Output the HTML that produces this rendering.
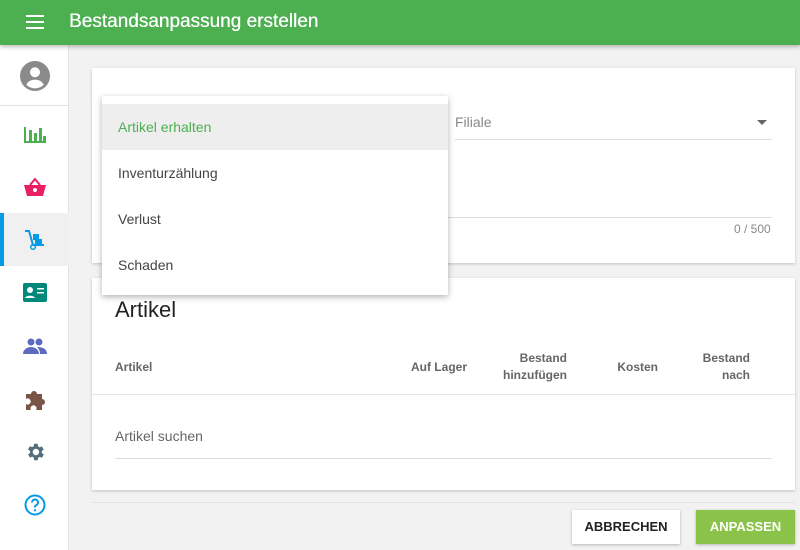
<!DOCTYPE html>
<html><head><meta charset="utf-8">
<style>
*{box-sizing:border-box;margin:0;padding:0}
body{width:800px;height:550px;overflow:hidden;background:#f2f2f2;font-family:"Liberation Sans",Arial,sans-serif;position:relative}
.hdr{position:absolute;left:0;top:0;width:800px;height:45px;background:#4caf50;box-shadow:0 2px 4px rgba(0,0,0,.25);z-index:5}
.hdr .t{position:absolute;left:69px;top:11px;color:#fff;font-size:19px;text-shadow:0.3px 0 0 #fff}
.burger{position:absolute;left:26px;top:15px;width:18px}
.burger i{display:block;height:2px;background:#fff;margin-bottom:4px}
.side{position:absolute;left:0;top:45px;width:69px;height:505px;background:#fff;border-right:1px solid #e3e3e3}
.ic{position:absolute;left:0;width:69px;height:53px;display:flex;align-items:center;justify-content:center}
.card{position:absolute;background:#fff;box-shadow:0 1px 3px rgba(0,0,0,.2)}
.dd{position:absolute;left:102px;top:96px;width:346px;height:199px;background:#fff;box-shadow:0 2px 6px rgba(0,0,0,.3);z-index:3;padding-top:8px}
.dd div{height:46px;line-height:46px;padding-left:16px;font-size:14px;color:#444}
.th{position:absolute;font-size:12px;color:#666;text-align:right;line-height:17px;font-weight:bold}
.btn{position:absolute;top:510px;height:34px;line-height:34px;text-align:center;font-size:13px;font-weight:bold;box-shadow:0 1px 3px rgba(0,0,0,.25)}
</style></head><body>
<div class="hdr"><div class="burger"><i></i><i></i><i></i></div><div class="t">Bestandsanpassung erstellen</div></div>
<div class="side">
 <div class="ic" style="top:4px;height:53px"><svg width="30" height="30" viewBox="0 0 24 24"><circle cx="12" cy="12" r="12" fill="#8a8a8a"/><circle cx="12" cy="9" r="4" fill="#fff"/><path d="M5 19c1.5-3 4-4 7-4s5.5 1 7 4a10 10 0 0 1-14 0z" fill="#fff"/></svg></div>
 <div style="position:absolute;left:0;top:60px;width:69px;border-top:1px solid #e3e3e3"></div>
 <div class="ic" style="top:62px"><svg width="22" height="20" viewBox="0 0 22 20"><g fill="#4caf50"><rect x="0" y="3" width="2" height="16"/><rect x="0" y="17" width="22" height="2"/><rect x="5" y="6" width="3" height="12"/><rect x="10" y="9" width="3" height="9"/><rect x="15" y="4" width="3" height="14"/><rect x="19" y="12" width="3" height="6"/></g></svg></div>
 <div class="ic" style="top:115px"><svg width="22" height="20" viewBox="0 0 22 20"><path d="M6 8l5-6 5 6" stroke="#e91e63" stroke-width="2" fill="none"/><path d="M0 8h22l-3 11H3z" fill="#e91e63"/><circle cx="11" cy="13" r="2" fill="#fff"/></svg></div>
 <div class="ic" style="top:168px;background:#f0f0f0"><div style="position:absolute;left:0;top:0;width:4px;height:53px;background:#039be5"></div><svg width="22" height="22" viewBox="0 0 22 22"><path d="M1 2h4l4 14h11" stroke="#039be5" stroke-width="2" fill="none"/><rect x="9" y="5" width="6" height="6" fill="#039be5"/><rect x="11" y="10" width="7" height="5" fill="#039be5"/><circle cx="9" cy="18" r="2.3" fill="none" stroke="#039be5" stroke-width="1.5"/></svg></div>
 <div class="ic" style="top:221px"><svg width="24" height="20" viewBox="0 0 24 20"><rect width="24" height="19" rx="2" fill="#00897b"/><circle cx="7" cy="7" r="3" fill="#fff"/><path d="M2 15c1-3 9-3 10 0z" fill="#fff"/><rect x="14" y="5" width="7" height="1.5" fill="#fff"/><rect x="14" y="9" width="7" height="1.5" fill="#fff"/></svg></div>
 <div class="ic" style="top:274px"><svg width="24" height="16" viewBox="0 0 24 16"><g fill="#5c6bc0"><circle cx="8" cy="4" r="3.5"/><circle cx="16" cy="4" r="3.5"/><path d="M0 16c0-5 5-7 8-7s8 2 8 7z"/><path d="M14 9c4 0 10 1 10 7h-7c0-3-1-5-3-7z"/></g></svg></div>
 <div class="ic" style="top:327px"><svg width="22" height="22" viewBox="0 0 22 22"><path d="M2 6h5a3 3 0 1 1 6 0h5v5a3 3 0 1 1 0 6v5h-6a3 3 0 1 0-5 0H2v-6a3 3 0 1 0 0-5z" fill="#795548"/></svg></div>
 <div class="ic" style="top:380px"><svg width="22" height="22" viewBox="0 0 24 24"><path fill="#546e7a" d="M19.4 13a7.5 7.5 0 0 0 0-2l2.1-1.6-2-3.5-2.5 1a7 7 0 0 0-1.7-1L15 3h-4l-.4 2.7a7 7 0 0 0-1.7 1l-2.5-1-2 3.5L6.6 11a7.5 7.5 0 0 0 0 2l-2.1 1.6 2 3.5 2.5-1a7 7 0 0 0 1.7 1L11 21h4l.4-2.7a7 7 0 0 0 1.7-1l2.5 1 2-3.5zM13 15.5a3.5 3.5 0 1 1 0-7 3.5 3.5 0 0 1 0 7z"/></svg></div>
 <div class="ic" style="top:433px"><svg width="22" height="22" viewBox="0 0 22 22"><circle cx="11" cy="11" r="9.5" fill="none" stroke="#039be5" stroke-width="2"/><path d="M8 8.5a3 3 0 1 1 4 2.8c-1 .5-1 1-1 2.2" fill="none" stroke="#039be5" stroke-width="2"/><circle cx="11" cy="16.3" r="1.2" fill="#039be5"/></svg></div>
</div>

<div class="card" style="left:92px;top:68px;width:703px;height:195px">
 <div style="position:absolute;left:363px;top:46px;font-size:14px;color:#888">Filiale</div>
 <div style="position:absolute;left:665px;top:52px;border:5px solid transparent;border-top-color:#666;border-bottom:0"></div>
 <div style="position:absolute;left:363px;top:71px;width:317px;border-top:1px solid #ddd"></div>
 <div style="position:absolute;left:20px;top:149px;width:660px;border-top:1px solid #ddd"></div>
 <div style="position:absolute;left:642px;top:154px;font-size:12px;color:#888">0 / 500</div>
</div>

<div class="dd">
 <div style="background:#eee;color:#4caf50">Artikel erhalten</div>
 <div>Inventurzählung</div>
 <div>Verlust</div>
 <div>Schaden</div>
</div>

<div class="card" style="left:92px;top:278px;width:703px;height:212px">
 <div style="position:absolute;left:23px;top:19px;font-size:22px;color:#222">Artikel</div>
 <div class="th" style="left:23px;top:81px">Artikel</div>
 <div class="th" style="left:300px;width:75px;top:81px">Auf Lager</div>
 <div class="th" style="left:380px;width:95px;top:72px">Bestand<br>hinzufügen</div>
 <div class="th" style="left:500px;width:66px;top:81px">Kosten</div>
 <div class="th" style="left:590px;width:68px;top:72px">Bestand<br>nach</div>
 <div style="position:absolute;left:0;top:116px;width:703px;border-top:1px solid #e5e5e5"></div>
 <div style="position:absolute;left:23px;top:150px;font-size:14px;color:#666">Artikel suchen</div>
 <div style="position:absolute;left:23px;top:180px;width:657px;border-top:1px solid #ddd"></div>
</div>
<div style="position:absolute;left:92px;top:502px;width:703px;border-top:1px solid #e3e3e3"></div>

<div class="btn" style="left:572px;width:108px;background:#fff;color:#222">ABBRECHEN</div>
<div class="btn" style="left:696px;width:99px;background:#8bc34a;color:#fff">ANPASSEN</div>
</body></html>
